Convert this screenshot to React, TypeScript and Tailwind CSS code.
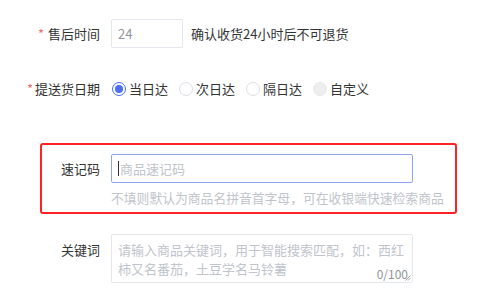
import React from "react";

function Radio({ label, checked, disabled }: { label: string; checked?: boolean; disabled?: boolean }) {
  return (
    <div className="flex items-center mr-[11px]">
      {checked ? (
        <span className="w-[14px] h-[14px] rounded-full border border-[#4d6ef0] flex items-center justify-center bg-white">
          <span className="w-[8px] h-[8px] rounded-full bg-[#4d6ef0]" />
        </span>
      ) : disabled ? (
        <span className="w-[14px] h-[14px] rounded-full border border-[#e4e7ed] bg-[#eeeeee]" />
      ) : (
        <span className="w-[14px] h-[14px] rounded-full border border-[#dcdfe6] bg-white" />
      )}
      <span className="ml-[3px] text-[13px] text-[#333]">{label}</span>
    </div>
  );
}

export default function App() {
  return (
    <div
      className="w-[488px] h-[301px] bg-white overflow-hidden relative"
      style={{ fontFamily: '"Noto Sans CJK SC", "Noto Sans", sans-serif' }}
    >
      <div className="pt-[19px]">
        {/* Row 1 */}
        <div className="flex items-center h-[29px]">
          <div className="w-[100px] text-right text-[13px] text-[#333] leading-[18px]">
            <span className="text-[#f56c6c] mr-[4px]">*</span>售后时间
          </div>
          <div className="ml-[11px] w-[72px] h-[29px] border border-[#e4e7ed] rounded-[2px] flex items-center pl-[6px] text-[13px] text-[#909399]">
            24
          </div>
          <div className="ml-[8px] text-[13px] text-[#333]">确认收货24小时后不可退货</div>
        </div>

        {/* Row 2 */}
        <div className="flex items-center h-[29px] mt-[26px]">
          <div className="w-[100px] text-right text-[13px] text-[#333] leading-[18px]">
            <span className="text-[#f56c6c] mr-[2px]">*</span>提送货日期
          </div>
          <div className="ml-[12px] flex items-center">
            <Radio label="当日达" checked />
            <Radio label="次日达" />
            <Radio label="隔日达" />
            <Radio label="自定义" disabled />
          </div>
        </div>

        {/* Red box */}
        <div className="ml-[40px] mt-[40px] w-[417px] h-[71px] border-[2px] border-[#ff2222] rounded-[3px] pt-[9px]">
          <div className="flex items-center h-[29px]">
            <div className="w-[58px] text-right text-[13px] text-[#333]">速记码</div>
            <div className="ml-[11px] w-[302px] h-[29px] border border-[#8ea3f2] rounded-[2px] flex items-center pl-[6px] text-[13px] text-[#c0c4cc]">
              <span className="w-px h-[15px] bg-[#333] mr-[1px]" />
              商品速记码
            </div>
          </div>
          <div className="ml-[69px] mt-[6px] text-[12.8px] leading-[18px] text-[#c0c4cc] whitespace-nowrap">
            不填则默认为商品名拼音首字母，可在收银端快速检索商品
          </div>
        </div>

        {/* Keyword */}
        <div className="flex items-start mt-[20px]">
          <div className="w-[100px] text-right text-[13px] text-[#333] pt-[6px] leading-[19px]">关键词</div>
          <div className="ml-[11px] w-[302px] h-[49px] border border-[#e4e7ed] rounded-[2px] relative pl-[6px] pt-[5px] text-[13px] leading-[19px] text-[#c0c4cc]">
            <div className="whitespace-nowrap">请输入商品关键词，用于智能搜索匹配，如：西红</div>
            <div className="whitespace-nowrap">柿又名番茄，土豆学名马铃薯</div>
            <span className="absolute right-[4px] bottom-[1px] text-[12px] leading-[14px] text-[#909399]">0/100</span>
            <svg className="absolute right-[1px] bottom-[1px]" width="6" height="6" viewBox="0 0 6 6">
              <line x1="0.5" y1="5.5" x2="5.5" y2="0.5" stroke="#888" strokeWidth="0.8" />
              <line x1="3" y1="5.5" x2="5.5" y2="3" stroke="#888" strokeWidth="0.8" />
            </svg>
          </div>
        </div>
      </div>
    </div>
  );
}
